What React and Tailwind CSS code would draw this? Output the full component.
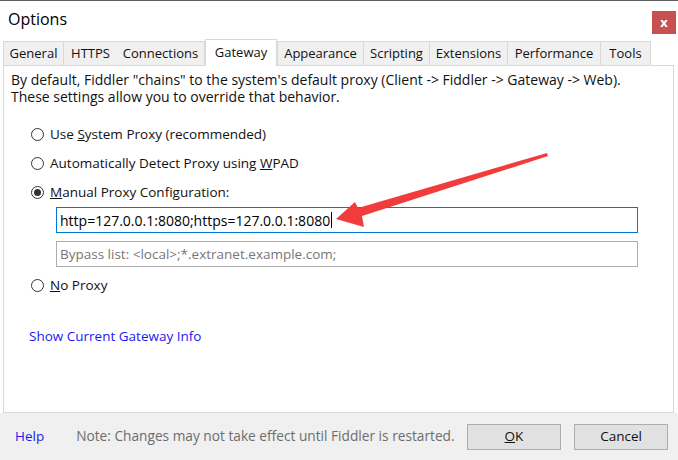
import React from "react";

const font = { fontFamily: '"Open Sans", "Noto Sans", sans-serif' };

function Radio({ checked }) {
  return (
    <span className="flex h-[13px] w-[13px] shrink-0 items-center justify-center rounded-full border border-[#333] bg-white">
      {checked && <span className="h-[7px] w-[7px] rounded-full bg-[#333]" />}
    </span>
  );
}

function RadioRow({ checked, children, className = "" }) {
  return (
    <div className={"flex h-[17px] items-center gap-[6px] pl-[27px] text-[13.5px] text-[#111] " + className}>
      <Radio checked={checked} />
      <span>{children}</span>
    </div>
  );
}

const tabs = [
  ["General", "w-[60px]"],
  ["HTTPS", "w-[54px]"],
  ["Connections", "w-[88px]"],
  ["Gateway", "w-[72px]"],
  ["Appearance", "w-[86px]"],
  ["Scripting", "w-[66px]"],
  ["Extensions", "w-[78px]"],
  ["Performance", "w-[93px]"],
  ["Tools", "w-[51px]"],
];

export default function App() {
  return (
    <div
      className="relative flex h-[460px] w-[678px] flex-col overflow-hidden border-t border-[#5f5f5f] bg-white"
      style={font}
    >
      {/* title bar */}
      <div className="flex h-[39px] items-start justify-between">
        <div className="pl-[8px] pt-[6px] text-[16px] text-black">Options</div>
        <div className="mr-[2px] mt-[10px] flex h-[23px] w-[24px] items-center justify-center bg-[#c75050] text-[13px] font-bold leading-none text-white">
          x
        </div>
      </div>

      {/* tabs */}
      <div className="relative z-10 -mb-px flex h-[26px] items-end pl-[3px]">
        {tabs.map(([name, w], i) =>
          name === "Gateway" ? (
            <div
              key={name}
              className={w + " flex h-[27px] items-start justify-center border border-b-0 border-[#d9d9d9] bg-white pt-[3px] text-[13px] text-[#111]"}
            >
              {name}
            </div>
          ) : (
            <div
              key={name}
              className={
                w +
                " flex h-[25px] items-center justify-center border-t border-[#d9d9d9] bg-[#f0f0f0] text-[13px] text-[#111] " +
                (i === 0 || i === 4 ? "border-l " : "") +
                (i === 2 || i === tabs.length - 1 ? "border-r " : "") +
                (i !== 2 && i !== 3 && i !== 0 && i !== 4 ? "border-l " : "") +
                "border-b"
              }
            >
              {name}
            </div>
          )
        )}
      </div>

      {/* panel */}
      <div className="mx-[3px] mr-[4px] flex h-[348px] flex-col border border-[#d9d9d9] bg-white">
        <div className="pl-[7px] pt-[5px] text-[14px] leading-[17px] text-[#111]">
          <div>By default, Fiddler "chains" to the system's default proxy (Client -&gt; Fiddler -&gt; Gateway -&gt; Web).</div>
          <div>These settings allow you to override that behavior.</div>
        </div>

        <RadioRow className="mt-[21px]">
          Use <u>S</u>ystem Proxy (recommended)
        </RadioRow>
        <RadioRow className="mt-[12px]">
          Automatically Detect Proxy using <u>W</u>PAD
        </RadioRow>
        <RadioRow checked className="mt-[12px]">
          <u>M</u>anual Proxy Configuration:
        </RadioRow>

        <div className="ml-[52px] mt-[6px] flex h-[26px] w-[582px] items-center border border-[#0078d7] pl-[3px] text-[14px] text-black">
          <span>http=127.0.0.1:8080;https=127.0.0.1:8080</span>
          <span className="ml-px h-[16px] w-px bg-black" />
        </div>
        <div className="ml-[52px] mt-[8px] flex h-[26px] w-[582px] items-center border border-[#adadad] pl-[3px] text-[13.5px] text-[#777]">
          Bypass list: &lt;local&gt;;*.extranet.example.com;
        </div>

        <RadioRow className="mt-[10px]">
          <u>N</u>o Proxy
        </RadioRow>

        <div className="mt-[34px] pl-[25px] text-[13.5px] leading-[17px] text-[#1a1af0]">Show Current Gateway Info</div>
      </div>

      {/* footer */}
      <div className="flex flex-1 items-center bg-[#f0f0f0] pl-[15px]">
        <span className="text-[13.5px] text-[#1a1af0]">Help</span>
        <span className="ml-[32px] text-[13.7px] text-[#6d6d6d]">
          Note: Changes may not take effect until Fiddler is restarted.
        </span>
        <div className="ml-auto mr-[10px] flex gap-[13px]">
          <div className="flex h-[26px] w-[94px] items-center justify-center border border-[#adadad] bg-[#e1e1e1] text-[13.5px] text-[#111]">
            <span>
              <u>O</u>K
            </span>
          </div>
          <div className="flex h-[26px] w-[94px] items-center justify-center border border-[#adadad] bg-[#e1e1e1] text-[13.5px] text-[#111]">
            Cancel
          </div>
        </div>
      </div>

      {/* red arrow annotation */}
      <svg className="pointer-events-none absolute left-0 top-0" width="678" height="460">
        <polygon
          points="336,218 355,201 358,207 547,152 548,155 362,215 364,226"
          fill="#f23b3b"
        />
      </svg>
    </div>
  );
}
